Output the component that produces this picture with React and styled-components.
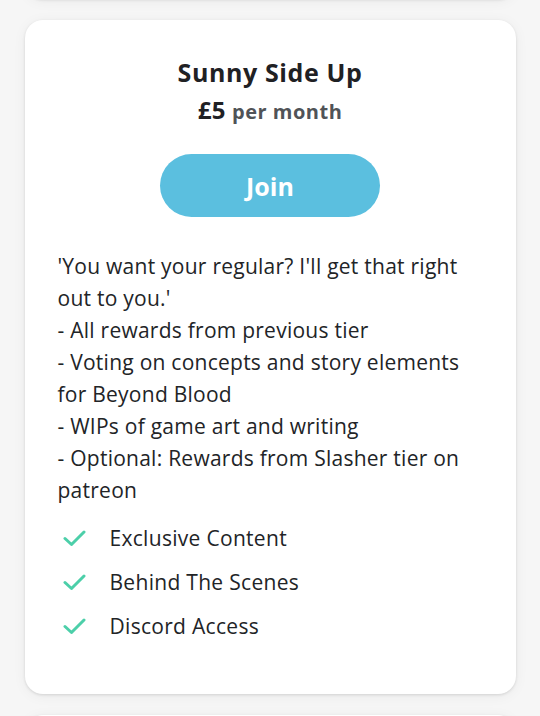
import React from 'react'
import styled, { createGlobalStyle } from 'styled-components'

const GlobalStyle = createGlobalStyle`
  html, body {
    margin: 0;
    padding: 0;
    background: #f6f6f6;
    font-family: 'Open Sans', 'Noto Sans', sans-serif;
  }
`

const Page = styled.div`
  display: flex;
  flex-direction: column;
  align-items: center;
  gap: 21px;
  padding: 0 24px;
  height: 716px;
  overflow: hidden;
`

const Card = styled.div`
  width: 491px;
  box-sizing: border-box;
  background: #fff;
  border-radius: 18px;
  box-shadow: 0 1px 3px rgba(0, 0, 0, 0.12), 0 2px 14px rgba(0, 0, 0, 0.05);
  flex-shrink: 0;
`

const SideCard = styled(Card)`
  height: ${p => p.$height}px;
  margin-top: ${p => p.$offset || 0}px;
`

const TierCard = styled(Card)`
  padding: 33px 33px 52px;
`

const Title = styled.h2`
  margin: 0;
  text-align: center;
  font-size: 25px;
  letter-spacing: 0.6px;
  font-weight: 700;
  color: #1f2124;
  line-height: 38px;
`

const Price = styled.div`
  text-align: center;
  line-height: 38px;
  color: #1f2124;
  letter-spacing: 0.5px;
  strong {
    font-size: 24px;
    font-weight: 700;
  }
  span {
    font-size: 20px;
    font-weight: 700;
    color: #505357;
    margin-left: 6px;
  }
`

const JoinButton = styled.button`
  display: block;
  margin: 22px auto 0;
  width: 220px;
  height: 63px;
  border: none;
  border-radius: 32px;
  background: #5bbfdf;
  color: #fff;
  font-family: inherit;
  font-size: 25px;
  font-weight: 700;
`

const Description = styled.p`
  margin: 33px 0 0;
  font-size: 21px;
  letter-spacing: 0.25px;
  line-height: 32px;
  color: #222427;
  white-space: pre-line;
`

const Features = styled.ul`
  list-style: none;
  margin: 16px 0 0;
  padding: 0 0 0 4px;
  display: flex;
  flex-direction: column;
  gap: 12px;
`

const Feature = styled.li`
  display: flex;
  align-items: center;
  gap: 24px;
  font-size: 21px;
  letter-spacing: 0.3px;
  line-height: 32px;
  color: #222427;
`

const Check = () => (
  <svg width="24" height="20" viewBox="0 0 24 20" fill="none">
    <path d="M3 10.5 L9.5 16.5 L22 4" stroke="#4ccfa9" strokeWidth="3" strokeLinecap="round" strokeLinejoin="round" />
  </svg>
)

const description = `'You want your regular? I'll get that right out to you.'
- All rewards from previous tier
- Voting on concepts and story elements for Beyond Blood
- WIPs of game art and writing
- Optional: Rewards from Slasher tier on patreon`

export default function App() {
  return (
    <>
      <GlobalStyle />
      <Page>
        <SideCard $height={40} $offset={-41} />
        <TierCard>
          <Title>Sunny Side Up</Title>
          <Price><strong>£5</strong><span>per month</span></Price>
          <JoinButton>Join</JoinButton>
          <Description>{description}</Description>
          <Features>
            {['Exclusive Content', 'Behind The Scenes', 'Discord Access'].map(f => (
              <Feature key={f}><Check />{f}</Feature>
            ))}
          </Features>
        </TierCard>
        <SideCard $height={200} />
      </Page>
    </>
  )
}
